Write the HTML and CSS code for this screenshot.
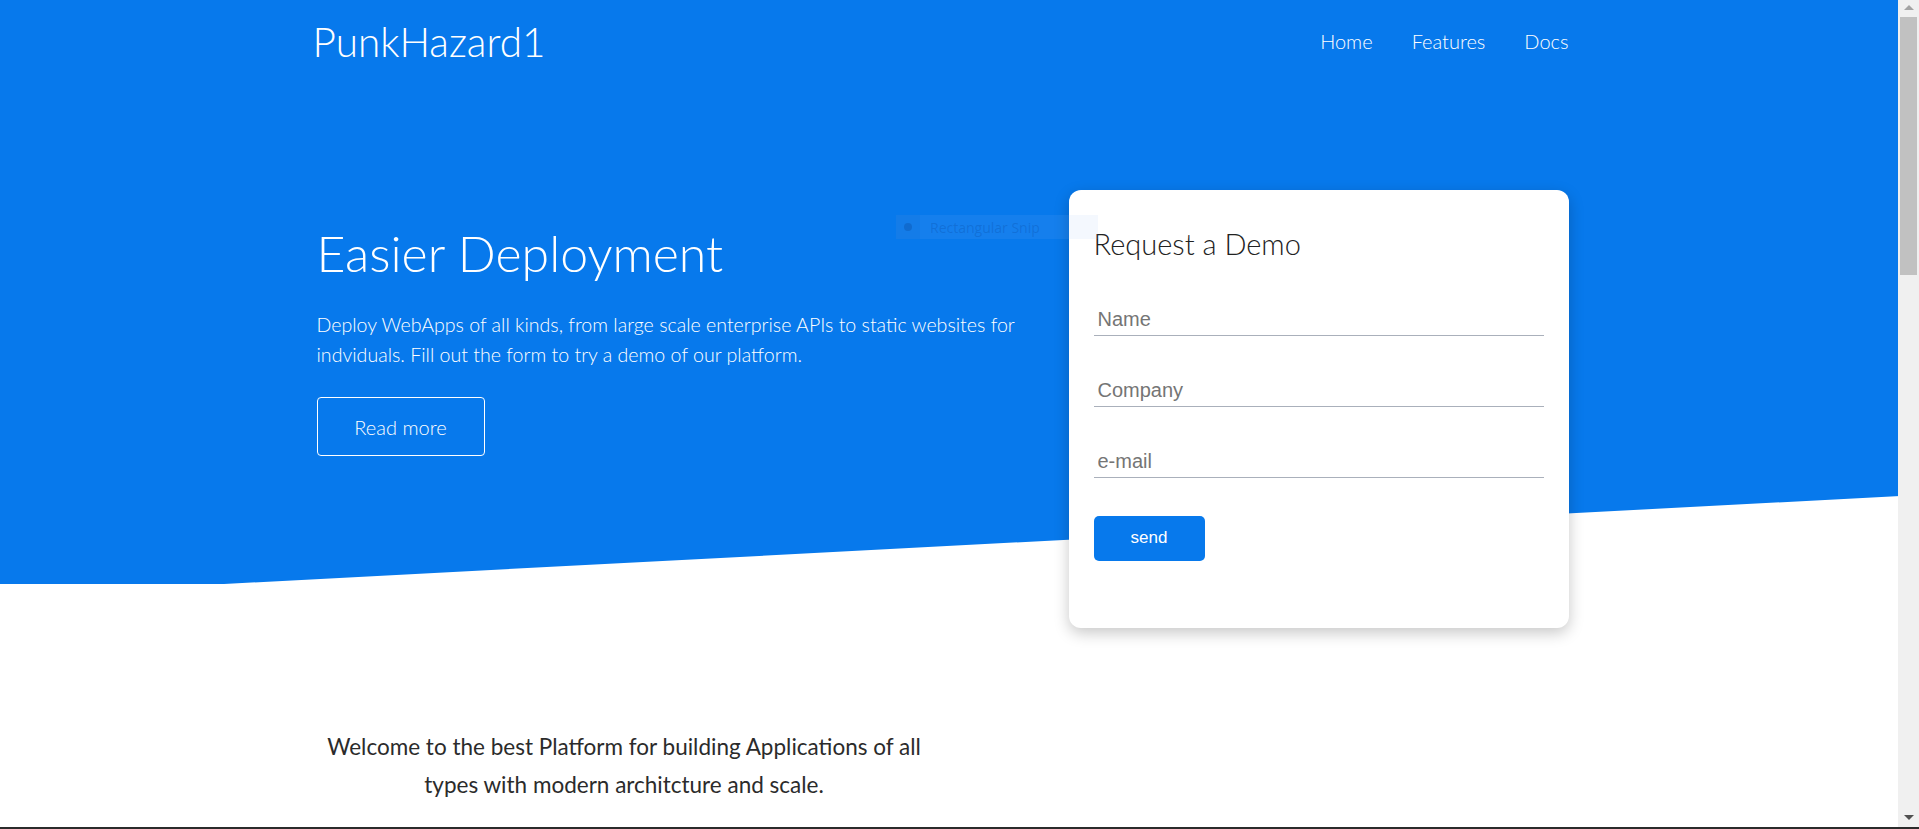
FILE: index.html
```html
<!DOCTYPE html>
<html lang="en">
<head>
    <meta charset="UTF-8">
    <meta name="viewport" content="width=device-width, initial-scale=1.0">
    <title>PunkHazard1</title>
    <link rel="stylesheet" href="styles.css">
</head>
<body>
    <header class="hero">
        <nav class="container nav">
            <a class="logo" href="#">PunkHazard1</a>
            <ul class="nav-links">
                <li><a href="#">Home</a></li>
                <li><a href="#">Features</a></li>
                <li><a href="#">Docs</a></li>
            </ul>
        </nav>
        <div class="container hero-row">
            <div class="hero-text">
                <h1>Easier Deployment</h1>
                <p>Deploy WebApps of all kinds, from large scale enterprise APIs to static websites for indviduals. Fill out the form to try a demo of our platform.</p>
                <a class="btn-outline" href="#">Read more</a>
            </div>
            <div class="demo-card">
                <h2>Request a Demo</h2>
                <form id="demoForm">
                    <input type="text" name="name" placeholder="Name">
                    <input type="text" name="company" placeholder="Company">
                    <input type="email" name="email" placeholder="e-mail">
                    <button type="submit">send</button>
                </form>
            </div>
        </div>
        <div class="snip-tip"><span class="snip-icon"><span class="snip-dot"></span></span>Rectangular Snip</div>
    </header>

    <section class="container welcome">
        <p>Welcome to the best Platform for building Applications of all types with modern architcture and scale.</p>
    </section>

    <section class="container features">
        <h2>Features</h2>
        <p>Build, ship and scale with one platform.</p>
    </section>

    <footer class="container footer">
        <p>PunkHazard1</p>
    </footer>

    <div class="scrollbar">
        <span class="arrow-up"></span>
        <span class="thumb"></span>
        <span class="arrow-down"></span>
    </div>
    <div class="screen-edge"></div>
</body>
</html>
```

FILE: styles.css
```css
html, body {
    margin: 0;
    padding: 0;
}
body {
    font-family: Lato, "Open Sans", sans-serif;
    color: #333;
    background: #fff;
}
a {
    text-decoration: none;
    color: inherit;
}
.container {
    width: 1256px;
    padding-right: 38px;
    margin: 0 auto;
}

/* hero */
.hero {
    position: relative;
    height: 584px;
    color: #fff;
}
.hero::before {
    content: "";
    position: absolute;
    top: 0;
    left: 0;
    right: 0;
    height: 584px;
    z-index: -1;
    background: #0779ec;
    clip-path: polygon(0 0, 100% 0, 100% 495px, 224px 584px, 0 584px);
}
.nav {
    display: flex;
    justify-content: space-between;
    align-items: center;
    height: 82px;
}
.logo {
    font-size: 40.5px;
    font-weight: 300;
}
.nav-links {
    display: flex;
    gap: 39px;
    list-style: none;
    margin: 0;
    padding: 0;
}
.nav-links a {
    font-size: 20px;
    font-weight: 300;
}
.hero-row {
    display: flex;
    justify-content: space-between;
    align-items: flex-start;
    margin-top: 108px;
}
.hero-text {
    width: 740px;
    padding: 33px 0 0 4px;
}
.hero-text h1 {
    font-size: 50px;
    font-weight: 300;
    line-height: 1.2;
    margin: 0;
}
.hero-text p {
    font-size: 19.6px;
    font-weight: 300;
    line-height: 30px;
    margin: 27px 0 27px;
}
.btn-outline {
    display: inline-flex;
    align-items: center;
    justify-content: center;
    width: 166px;
    height: 57px;
    border: 1px solid #fff;
    border-radius: 4px;
    font-size: 20px;
    font-weight: 300;
}

/* demo form */
.demo-card {
    position: relative;
    z-index: 1;
    width: 450px;
    padding: 37px 25px 67px;
    background: #fff;
    border-radius: 12px;
    box-shadow: 0 5px 15px rgba(0, 0, 0, 0.22);
    color: #222;
}
.demo-card h2 {
    font-size: 29px;
    font-weight: 300;
    line-height: 1.2;
    margin: 0 0 35px;
}
.demo-card form {
    display: flex;
    flex-direction: column;
    align-items: flex-start;
}
.demo-card input {
    box-sizing: border-box;
    width: 100%;
    height: 39px;
    padding: 10px 4px 3px;
    margin-bottom: 32px;
    border: none;
    border-bottom: 1px solid #aab0bb;
    font-family: "Liberation Sans", Arial, sans-serif;
    font-size: 20px;
    color: #333;
    outline: none;
}
.demo-card input::placeholder {
    color: #757575;
}
.demo-card button {
    width: 111px;
    height: 45px;
    margin-top: 6px;
    border: none;
    border-radius: 5px;
    background: #0779ec;
    color: #fff;
    font-family: "Liberation Sans", Arial, sans-serif;
    font-size: 17px;
}

/* snipping tool label */
.snip-tip {
    position: absolute;
    z-index: 2;
    left: 896px;
    top: 215px;
    width: 202px;
    height: 24px;
    display: flex;
    align-items: center;
    background: rgba(150, 190, 245, 0.1);
    color: rgba(0, 50, 130, 0.2);
    font-family: "Open Sans", sans-serif;
    font-size: 14px;
}
.snip-icon {
    display: flex;
    align-items: center;
    justify-content: center;
    width: 24px;
    height: 24px;
    margin-right: 10px;
    background: rgba(0, 30, 90, 0.03);
}
.snip-dot {
    width: 8px;
    height: 8px;
    border-radius: 50%;
    background: rgba(0, 40, 110, 0.2);
}

/* welcome */
.welcome p {
    width: 623px;
    margin: 0;
    padding-top: 144px;
    text-align: center;
    font-size: 22.5px;
    line-height: 38px;
    color: #2b2b2b;
}
.features {
    min-height: 1300px;
    padding-top: 200px;
}
.features h2 {
    font-weight: 300;
    font-size: 36px;
}
.footer {
    padding: 40px 0;
    color: #777;
}

/* window chrome */
.scrollbar {
    position: fixed;
    top: 0;
    right: 0;
    bottom: 0;
    width: 21px;
    z-index: 10;
    background: #f0f0f0;
}
.thumb {
    position: absolute;
    left: 2px;
    right: 2px;
    top: 17px;
    height: 258px;
    background: #c1c1c1;
}
.arrow-up,
.arrow-down {
    position: absolute;
    left: 6px;
    width: 0;
    height: 0;
    border-left: 5px solid transparent;
    border-right: 5px solid transparent;
}
.arrow-up {
    top: 5px;
    border-bottom: 5px solid #a3a3a3;
}
.arrow-down {
    bottom: 9px;
    border-top: 5px solid #505050;
}
.screen-edge {
    position: fixed;
    left: 0;
    right: 0;
    bottom: 0;
    height: 2px;
    z-index: 11;
    background: #2b2b2b;
}
```
